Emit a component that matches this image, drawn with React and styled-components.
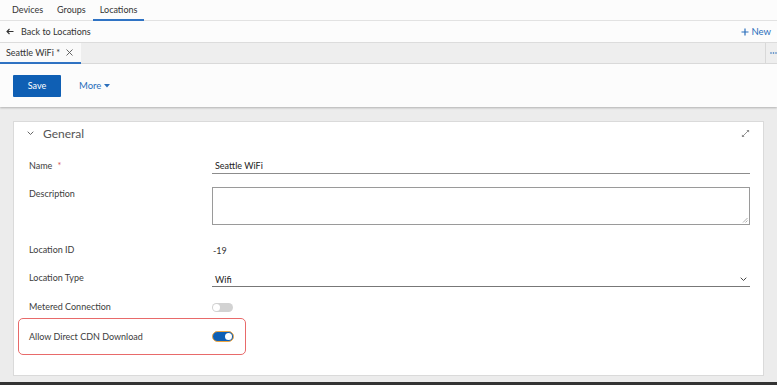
import React from 'react';
import styled, { createGlobalStyle } from 'styled-components';

const GlobalStyle = createGlobalStyle`
  html, body {
    margin: 0;
    padding: 0;
    background: #ececec;
  }
  body {
    font-family: Lato, "Open Sans", sans-serif;
    color: #333;
  }
`;

const Page = styled.div`
  display: flex;
  flex-direction: column;
  width: 777px;
  height: 385px;
  overflow: hidden;
  background: #ececec;
`;

const TopNav = styled.nav`
  display: flex;
  height: 20px;
  padding-left: 5px;
  background: #fcfcfc;
  border-bottom: 1px solid #e2e2e2;
`;

const NavItem = styled.div`
  display: flex;
  align-items: center;
  padding: 0 7px;
  font-size: 9px;
  color: #333;
  border-bottom: 2px solid ${(p) => (p.$active ? '#2f73c4' : 'transparent')};
  margin-bottom: -1px;
`;

const BackBar = styled.div`
  display: flex;
  align-items: center;
  justify-content: space-between;
  height: 21px;
  padding: 0 6px 0 6px;
  background: #fcfcfc;
  border-bottom: 1px solid #dcdcdc;
`;

const BackLink = styled.div`
  display: flex;
  align-items: center;
  gap: 7px;
  font-size: 9px;
  color: #333;
`;

const NewLink = styled.div`
  display: flex;
  align-items: center;
  gap: 2px;
  font-size: 9.5px;
  color: #2a6ebb;
`;

const TabStrip = styled.div`
  display: flex;
  height: 20px;
  background: #eeeeee;
  border-bottom: 1px solid #dddddd;
`;

const DocTab = styled.div`
  display: flex;
  align-items: center;
  gap: 6px;
  width: 81px;
  box-sizing: border-box;
  padding-left: 6px;
  font-size: 9px;
  color: #333;
  background: #fafafa;
  border-bottom: 2px solid #2f73c4;
  margin-bottom: -1px;
`;

const StripSpacer = styled.div`
  flex: 1;
`;

const StripMore = styled.div`
  display: flex;
  align-items: center;
  justify-content: flex-end;
  width: 11px;
  border-left: 1px solid #d8d8d8;
`;

const Toolbar = styled.div`
  display: flex;
  align-items: center;
  gap: 18px;
  height: 43px;
  padding-left: 13px;
  background: #fcfcfc;
  box-shadow: 0 1px 2px rgba(0, 0, 0, 0.25);
  position: relative;
  z-index: 1;
`;

const PrimaryButton = styled.button`
  width: 48px;
  height: 22px;
  border: none;
  border-radius: 1px;
  background: #0f5fb4;
  color: #fff;
  font-family: inherit;
  font-size: 9px;
  padding: 0;
`;

const MenuButton = styled.div`
  display: flex;
  align-items: center;
  gap: 3px;
  font-size: 9.5px;
  color: #2a6ebb;
`;

const Content = styled.main`
  flex: 1;
  padding: 14px 13px 0 13px;
`;

const Card = styled.section`
  background: #fff;
  border: 1px solid #dadada;
  padding: 0 13px 20px 0;
`;

const CardHeader = styled.div`
  display: flex;
  align-items: center;
  height: 23px;
  padding: 0 0 0 13px;
  gap: 9px;
`;

const CardTitle = styled.h2`
  flex: 1;
  margin: 0;
  font-size: 12px;
  font-weight: 400;
  color: #555;
`;

const Row = styled.div`
  display: flex;
  align-items: ${(p) => (p.$top ? 'flex-start' : 'center')};
  height: ${(p) => p.$h || 20}px;
  margin-top: ${(p) => p.$mt || 0}px;
  padding-left: 15px;
`;

const Highlight = styled.div`
  display: flex;
  align-items: center;
  width: 228px;
  height: 37px;
  box-sizing: border-box;
  margin: 1px 0 0 4px;
  padding-left: 10px;
  border: 1.5px solid #e86a6a;
  border-radius: 5px;
`;

const Label = styled.label`
  width: 183px;
  flex-shrink: 0;
  font-size: 9px;
  line-height: 14px;
  color: #3c3c3c;
`;

const Required = styled.span`
  color: #d9534f;
  margin-left: 5px;
`;

const TextInput = styled.div`
  flex: 1;
  height: 15px;
  padding-left: 3px;
  display: flex;
  align-items: center;
  font-size: 9px;
  color: #222;
  border-bottom: 1px solid #8c8c8c;
`;

const TextArea = styled.div`
  flex: 1;
  height: 36px;
  border: 1px solid #9a9a9a;
  position: relative;
`;

const Grip = styled.svg`
  position: absolute;
  right: 1px;
  bottom: 1px;
`;

const Value = styled.span`
  font-size: 9px;
  color: #333;
  padding-left: 1px;
`;

const Select = styled.div`
  flex: 1;
  display: flex;
  align-items: center;
  justify-content: space-between;
  height: 14px;
  margin-top: 3px;
  padding: 0 3px;
  font-size: 9px;
  color: #222;
  border-bottom: 1px solid #777;
`;

const Switch = styled.div`
  width: ${(p) => (p.$on ? 22 : 21)}px;
  height: ${(p) => (p.$on ? 11 : 9)}px;
  box-sizing: border-box;
  border-radius: 6px;
  background: ${(p) => (p.$on ? '#0f5fb4' : '#d2d2d2')};
  border: ${(p) => (p.$on ? '1.5px solid #f0a640' : 'none')};
  display: flex;
  align-items: center;
  justify-content: ${(p) => (p.$on ? 'flex-end' : 'flex-start')};
  padding: 0 1px;
`;

const Knob = styled.span`
  width: 7px;
  height: 7px;
  border-radius: 50%;
  background: #fff;
`;

const Footer = styled.div`
  height: 3px;
  background: #333;
`;

const Chevron = ({ size = 7, color = '#555' }) => (
  <svg width={size} height={size * 0.6} viewBox="0 0 10 6">
    <path d="M1 1 L5 5 L9 1" fill="none" stroke={color} strokeWidth="1.3" />
  </svg>
);

const ExpandIcon = () => (
  <svg width="9" height="9" viewBox="0 0 10 10">
    <path d="M6 1 H9 V4 Z M1 6 V9 H4 Z" fill="#888" />
    <path d="M8 2 L2 8" stroke="#888" strokeWidth="1" />
  </svg>
);

export default function App() {
  return (
    <Page>
      <GlobalStyle />
      <TopNav>
        <NavItem>Devices</NavItem>
        <NavItem>Groups</NavItem>
        <NavItem $active>Locations</NavItem>
      </TopNav>
      <BackBar>
        <BackLink>
          <svg width="8" height="7" viewBox="0 0 8 7">
            <path d="M7.5 3.5 H1 M3.5 1 L1 3.5 L3.5 6" fill="none" stroke="#333" strokeWidth="1.1" />
          </svg>
          Back to Locations
        </BackLink>
        <NewLink>
          <svg width="8" height="8" viewBox="0 0 8 8">
            <path d="M4 0.5 V7.5 M0.5 4 H7.5" stroke="#2a6ebb" strokeWidth="1.2" />
          </svg>
          New
        </NewLink>
      </BackBar>
      <TabStrip>
        <DocTab>
          Seattle WiFi *
          <svg width="7" height="7" viewBox="0 0 7 7">
            <path d="M0.5 0.5 L6.5 6.5 M6.5 0.5 L0.5 6.5" stroke="#555" strokeWidth="0.9" />
          </svg>
        </DocTab>
        <StripSpacer />
        <StripMore>
          <svg width="7" height="2" viewBox="0 0 7 2">
            <circle cx="1" cy="1" r="0.8" fill="#2a6ebb" />
            <circle cx="3.5" cy="1" r="0.8" fill="#2a6ebb" />
            <circle cx="6" cy="1" r="0.8" fill="#2a6ebb" />
          </svg>
        </StripMore>
      </TabStrip>
      <Toolbar>
        <PrimaryButton>Save</PrimaryButton>
        <MenuButton>
          More
          <svg width="6" height="4" viewBox="0 0 6 4">
            <path d="M0 0 H6 L3 3.5 Z" fill="#2a6ebb" />
          </svg>
        </MenuButton>
      </Toolbar>
      <Content>
        <Card>
          <CardHeader>
            <Chevron />
            <CardTitle>General</CardTitle>
            <ExpandIcon />
          </CardHeader>
          <Row $mt={11}>
            <Label>
              Name<Required>*</Required>
            </Label>
            <TextInput>Seattle WiFi</TextInput>
          </Row>
          <Row $mt={11} $h={38} $top>
            <Label>Description</Label>
            <TextArea>
              <Grip width="6" height="6" viewBox="0 0 6 6">
                <path d="M5.5 1 L1 5.5 M5.5 3.5 L3.5 5.5" stroke="#999" strokeWidth="0.8" />
              </Grip>
            </TextArea>
          </Row>
          <Row $mt={15}>
            <Label>Location ID</Label>
            <Value>-19</Value>
          </Row>
          <Row $mt={8}>
            <Label>Location Type</Label>
            <Select>
              Wifi
              <Chevron color="#333" />
            </Select>
          </Row>
          <Row $mt={9}>
            <Label>Metered Connection</Label>
            <Switch>
              <Knob />
            </Switch>
          </Row>
          <Highlight>
            <Label>Allow Direct CDN Download</Label>
            <Switch $on>
              <Knob />
            </Switch>
          </Highlight>
        </Card>
      </Content>
      <Footer />
    </Page>
  );
}
